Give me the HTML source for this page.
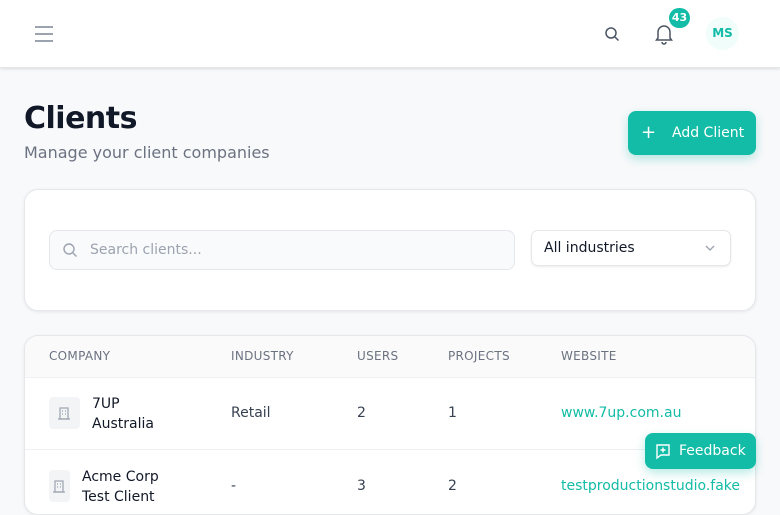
<!DOCTYPE html>
<html><head><meta charset="utf-8"><style>
*{box-sizing:border-box;margin:0;padding:0}
body{width:780px;height:493px;overflow:hidden;background:#f8f9fb;font-family:"DejaVu Sans","Liberation Sans",sans-serif;position:relative}
.hdr{position:absolute;left:0;top:0;width:780px;height:68px;background:#fff;box-shadow:0 1px 3px rgba(0,0,0,.12);border-bottom:1px solid #e5e7eb}
.abs{position:absolute}
h1{position:absolute;left:24px;top:101px;font-size:30px;font-weight:bold;color:#111827;letter-spacing:-0.5px}
.sub{left:24px;top:143px;font-size:16px;color:#6b7280}
.btn{left:628px;top:111px;width:128px;height:44px;background:#12bca6;border-radius:8px;color:#fff;font-size:14px;box-shadow:0 4px 10px rgba(20,184,166,.3)}
.card{background:#fff;border:1px solid #e5e7eb;border-radius:14px;box-shadow:0 1px 3px rgba(0,0,0,.08)}
.th{top:349px;font-size:12px;color:#6b7280;letter-spacing:.3px}
.td{font-size:14px;color:#374151}
a{color:#12bca6;text-decoration:none}
</style></head><body>
<div class="hdr">
  <div class="abs" style="left:35px;top:26px;width:18px;height:2px;background:#9ca3af;box-shadow:0 7px 0 #9ca3af,0 14px 0 #9ca3af"></div>
  <svg class="abs" style="left:604px;top:26px" width="16" height="16" viewBox="0 0 16 16" fill="none" stroke="#4b5563" stroke-width="1.5"><circle cx="7" cy="7" r="5"/><path d="M11 11l3.5 3.5"/></svg>
  <svg class="abs" style="left:654px;top:23px" width="20" height="22" viewBox="0 0 20 22" fill="none" stroke="#4b5563" stroke-width="1.5"><path d="M4 15V9a6 6 0 0 1 12 0v6l1.5 2h-15z"/><path d="M8 19a2 2 0 0 0 4 0"/></svg>
  <div class="abs" style="left:669px;top:8px;width:21px;height:20px;border-radius:10px;background:#12bca6;color:#fff;font-size:11px;font-weight:bold;text-align:center;line-height:20px">43</div>
  <div class="abs" style="left:706px;top:17px;width:33px;height:33px;border-radius:50%;background:#f0fdfa;color:#12bca6;font-size:12px;font-weight:bold;text-align:center;line-height:33px">MS</div>
</div>
<h1>Clients</h1>
<div class="abs sub">Manage your client companies</div>
<div class="abs btn"><span class="abs" style="left:13px;top:11px;font-size:18px">+</span><span class="abs" style="left:44px;top:14px">Add Client</span></div>
<div class="abs card" style="left:24px;top:189px;width:732px;height:122px"></div>
<div class="abs" style="left:49px;top:230px;width:466px;height:40px;background:#f9fafb;border:1px solid #e5e7eb;border-radius:8px">
  <svg class="abs" style="left:12px;top:11px" width="16" height="16" viewBox="0 0 16 16" fill="none" stroke="#9ca3af" stroke-width="1.4"><circle cx="7" cy="7" r="5"/><path d="M11 11l3.5 3.5"/></svg>
  <span class="abs" style="left:40px;top:11px;font-size:14px;color:#9ca3af">Search clients...</span>
</div>
<div class="abs" style="left:531px;top:230px;width:200px;height:36px;background:#fff;border:1px solid #e5e7eb;border-radius:7px;box-shadow:0 1px 2px rgba(0,0,0,.08)">
  <span class="abs" style="left:12px;top:9px;font-size:14px;color:#111827">All industries</span>
  <svg class="abs" style="left:172px;top:12px" width="12" height="10" viewBox="0 0 12 10" fill="none" stroke="#9ca3af" stroke-width="1.3"><path d="M2 3l4 4 4-4"/></svg>
</div>
<div class="abs card" style="left:24px;top:335px;width:732px;height:180px;overflow:hidden">
  <div style="height:42px;background:#fafafa;border-bottom:1px solid #eef0f2"></div>
  <div style="height:72px;border-bottom:1px solid #eef0f2"></div>
</div>
<div class="abs th" style="left:49px">COMPANY</div>
<div class="abs th" style="left:231px">INDUSTRY</div>
<div class="abs th" style="left:357px">USERS</div>
<div class="abs th" style="left:448px">PROJECTS</div>
<div class="abs th" style="left:561px">WEBSITE</div>
<div class="abs" style="left:49px;top:397px;width:31px;height:32px;background:#f3f4f6;border-radius:4px"></div>
<div class="abs" style="left:49px;top:470px;width:21px;height:32px;background:#f3f4f6;border-radius:4px"></div>
<svg class="abs" style="left:57px;top:405px" width="14" height="16" viewBox="0 0 14 16" fill="none" stroke="#9ca3af" stroke-width="1.2"><rect x="3" y="3" width="8" height="11"/><path d="M1 14h12M5 6h1M8 6h1M5 9h1M8 9h1"/></svg>
<svg class="abs" style="left:52px;top:478px" width="14" height="16" viewBox="0 0 14 16" fill="none" stroke="#9ca3af" stroke-width="1.2"><rect x="3" y="3" width="8" height="11"/><path d="M1 14h12M5 6h1M8 6h1M5 9h1M8 9h1"/></svg>
<div class="abs td" style="left:92px;top:394px;line-height:20px;color:#111827">7UP<br>Australia</div>
<div class="abs td" style="left:231px;top:405px">Retail</div>
<div class="abs td" style="left:357px;top:405px">2</div>
<div class="abs td" style="left:448px;top:405px">1</div>
<div class="abs td" style="left:561px;top:405px"><a>www.7up.com.au</a></div>
<div class="abs td" style="left:82px;top:467px;line-height:20px;color:#111827">Acme Corp<br>Test Client</div>
<div class="abs td" style="left:231px;top:478px">-</div>
<div class="abs td" style="left:357px;top:478px">3</div>
<div class="abs td" style="left:448px;top:478px">2</div>
<div class="abs td" style="left:561px;top:478px"><a>testproductionstudio.fake</a></div>
<div class="abs" style="left:645px;top:433px;width:111px;height:36px;background:#12bca6;border-radius:8px;color:#fff;font-size:14px;box-shadow:0 4px 10px rgba(20,184,166,.3)">
  <svg class="abs" style="left:9px;top:9px" width="18" height="18" viewBox="0 0 18 18" fill="none" stroke="#fff" stroke-width="1.4"><path d="M3 3h12v10H7l-4 3z"/><path d="M9 5.5v5M6.5 8h5"/></svg>
  <span class="abs" style="left:34px;top:10px">Feedback</span>
</div>
</body></html>
